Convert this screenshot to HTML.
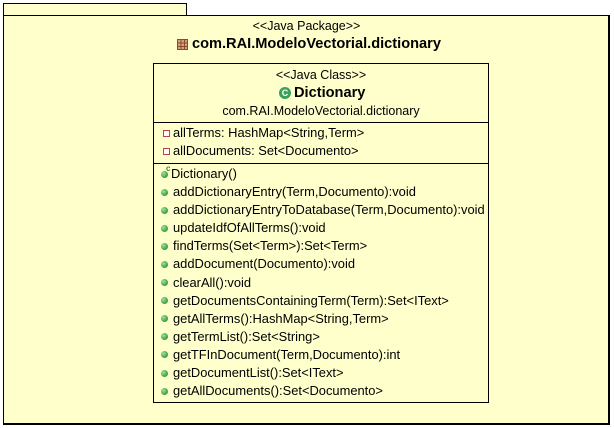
<!DOCTYPE html>
<html><head><style>
body{margin:0;width:614px;height:428px;background:#fff;position:relative;font-family:"Liberation Sans",Arial,sans-serif;font-size:12px;color:#000;overflow:hidden}
.b{position:absolute;background:#ffffcc;border:1px solid #000;box-sizing:border-box}
.t{position:absolute;white-space:nowrap;line-height:14px}
.m{font-size:12.9px}
.c{text-align:center;left:0;right:0}
.dot{position:absolute;width:7px;height:7px;border-radius:50%;background:radial-gradient(circle at 35% 35%,#9be29b,#3d9a3d 70%)}
.sq{position:absolute;width:5px;height:5px;border:1px solid #c43c50;background:#fff}
</style></head><body>
<div class="b" style="left:3px;top:3px;width:184px;height:13px"></div>
<div class="b" style="left:3px;top:15px;width:607px;height:410px;border-width:1px 2px 2px 1px"></div>
<div class="t c" style="left:3px;right:4px;top:19px;font-size:12.5px">&lt;&lt;Java Package&gt;&gt;</div>
<div class="t" style="left:192px;top:37px;font-weight:bold;font-size:14.6px">
<svg width="11" height="11" style="position:absolute;left:-15px;top:2px"><rect x="0.5" y="0.5" width="10" height="10" fill="#d9a080" stroke="#8a4a30"/><path d="M4 0v11M7.5 0v11M0 4h11M0 7.5h11" stroke="#8a4a30"/></svg>com.RAI.ModeloVectorial.dictionary</div>
<div class="b" style="left:153px;top:63px;width:336px;height:340px"></div>
<div style="position:absolute;left:153px;top:122px;width:336px;height:1px;background:#000"></div>
<div style="position:absolute;left:153px;top:163px;width:336px;height:1px;background:#000"></div>
<div class="t c" style="left:153px;width:336px;top:68px;font-size:12.5px">&lt;&lt;Java Class&gt;&gt;</div>
<div class="t" style="left:294px;top:85px;font-weight:bold;font-size:14.6px;line-height:16px">
<span style="position:absolute;left:-15px;top:2px;width:12px;height:12px;border-radius:50%;background:#3aa05a;color:#fff;font-size:9px;line-height:12px;text-align:center">C</span>Dictionary</div>
<div class="t c" style="left:153px;width:336px;top:104px;font-size:12.5px">com.RAI.ModeloVectorial.dictionary</div>
<div class="sq" style="left:163px;top:130px"></div><div class="t m" style="left:173px;top:126px">allTerms: HashMap&lt;String,Term&gt;</div>
<div class="sq" style="left:163px;top:148px"></div><div class="t m" style="left:173px;top:144px">allDocuments: Set&lt;Documento&gt;</div>
<div class="dot" style="left:161px;top:171px"></div><span class="t" style="left:166px;top:162px;font-size:8px;color:#3a8a3a;font-weight:bold">c</span><div class="t m" style="left:171px;top:167px">Dictionary()</div>
<div id="m"></div>
<script>
var m=["addDictionaryEntry(Term,Documento):void","addDictionaryEntryToDatabase(Term,Documento):void","updateIdfOfAllTerms():void","findTerms(Set&lt;Term&gt;):Set&lt;Term&gt;","addDocument(Documento):void","clearAll():void","getDocumentsContainingTerm(Term):Set&lt;IText&gt;","getAllTerms():HashMap&lt;String,Term&gt;","getTermList():Set&lt;String&gt;","getTFInDocument(Term,Documento):int","getDocumentList():Set&lt;IText&gt;","getAllDocuments():Set&lt;Documento&gt;"];
var h="";m.forEach(function(s,i){var y=185+i*18.1;h+='<div class="dot" style="left:161px;top:'+(y+3.5)+'px"></div><div class="t m" style="left:173px;top:'+y+'px">'+s+'</div>';});
document.getElementById("m").innerHTML=h;
</script>
</body></html>
